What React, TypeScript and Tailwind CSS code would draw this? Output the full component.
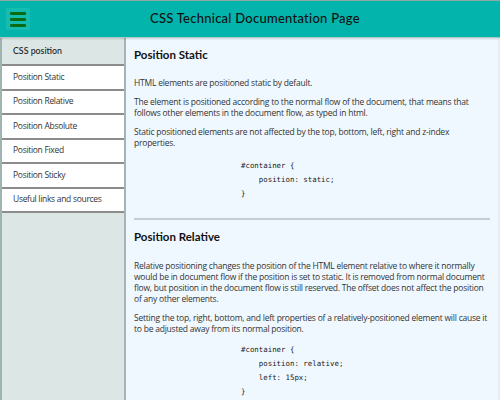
import { ReactNode } from "react";

const navItems = [
  "Position Static",
  "Position Relative",
  "Position Absolute",
  "Position Fixed",
  "Position Sticky",
  "Useful links and sources",
];

function P({ children }: { children: ReactNode }) {
  return <p className="text-[8.5px] leading-[11px] text-[#333] mb-[8px] tracking-[-0.22px]">{children}</p>;
}

function Code({ lines, top = "mt-[11px]" }: { lines: string[]; top?: string }) {
  return (
    <pre className={`font-['DejaVu_Sans_Mono',monospace] text-[7.4px] leading-[14px] text-[#222] pl-[107px] ${top}`}>
      {lines.join("\n")}
    </pre>
  );
}

export default function App() {
  return (
    <div className="w-[500px] h-[400px] overflow-hidden flex flex-col bg-[#f0f8ff] font-['Open_Sans',sans-serif] border-t border-[#8fa8a6]">
      <header className="h-[37px] shrink-0 bg-[#02b4ab] flex items-center border-b border-[#a9c9c6] shadow-[0_1px_2px_rgba(0,0,0,0.15)] relative z-10">
        <div className="ml-[6px] w-[24px] h-[22px] bg-[#14bcb2] flex flex-col justify-center items-center gap-[3px]">
          <span className="block w-[16px] h-[3px] bg-[#0a6b12] rounded-[1px]" />
          <span className="block w-[16px] h-[3px] bg-[#0a6b12] rounded-[1px]" />
          <span className="block w-[16px] h-[3px] bg-[#0a6b12] rounded-[1px]" />
        </div>
        <h1 className="ml-[120px] font-['Lato',sans-serif] text-[13px] font-medium text-[#111] tracking-[0.25px]">
          CSS Technical Documentation Page
        </h1>
      </header>
      <div className="flex flex-1 min-h-0">
        <nav className="w-[126px] shrink-0 bg-[#dce6e5] border-l-2 border-[#9fb3b1] border-r-2 border-r-[#a5b3b2]">
          <div className="h-[28px] flex items-center pl-[11px] text-[8.8px] font-['Lato',sans-serif] font-medium text-[#222] border-b-2 border-[#8c8c8c]">
            CSS position
          </div>
          <ul>
            {navItems.map((item) => (
              <li
                key={item}
                className="h-[24.5px] flex items-center pl-[11px] bg-white text-[8.5px] text-[#333] border-b-2 border-[#8c8c8c] tracking-[-0.3px]"
              >
                {item}
              </li>
            ))}
          </ul>
        </nav>
        <main className="flex-1 pl-[8px] pr-[8px] pt-[8px] border-r-2 border-[#e6eef4]">
          <section>
            <h2 className="font-['Lato',sans-serif] font-bold text-[11.5px] text-[#111] mb-[14px]">Position Static</h2>
            <P>HTML elements are positioned static by default.</P>
            <P>
              The element is positioned according to the normal flow of the document, that means that
              <br />
              follows other elements in the document flow, as typed in html.
            </P>
            <P>
              Static positioned elements are not affected by the top, bottom, left, right and z-index
              <br />
              properties.
            </P>
            <Code lines={["#container {", "    position: static;", "}"]} />
          </section>
          <hr className="mt-[17px] mb-[8px] border-0 h-[2px] bg-[#c4cdd0]" />
          <section>
            <h2 className="font-['Lato',sans-serif] font-bold text-[11.5px] text-[#111] mb-[14px]">Position Relative</h2>
            <P>
              Relative positioning changes the position of the HTML element relative to where it normally
              <br />
              would be in document flow if the position is set to static. It is removed from normal document
              <br />
              flow, but position in the document flow is still reserved. The offset does not affect the position
              <br />
              of any other elements.
            </P>
            <P>
              Setting the top, right, bottom, and left properties of a relatively-positioned element will cause it
              <br />
              to be adjusted away from its normal position.
            </P>
            <Code top="mt-[9px]" lines={["#container {", "    position: relative;", "    left: 15px;", "}"]} />
          </section>
        </main>
      </div>
    </div>
  );
}
